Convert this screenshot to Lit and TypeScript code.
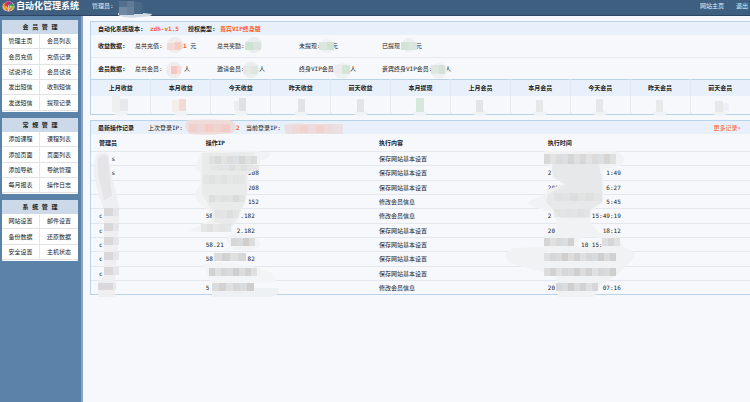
import { LitElement, html, svg, css, nothing } from "lit";
import { customElement } from "lit/decorators.js";

type Block = [x: number, y: number, w: number, h: number, fill: string];

interface Stat {
  label: string;
  slot: number;
  value?: string;
  unit: string;
  halo: string;
  blot: [cx: number, cy: number, r: number];
  blocks: Block[];
}

const MENUS = [
  { title: "会 员 管 理", items: ["管理主页", "会员列表", "会员充值", "充值记录", "试说评论", "会员试说", "发出短信", "收到短信", "发送短信", "提现记录"] },
  { title: "常 规 管 理", items: ["添加课程", "课程列表", "添加页面", "页面列表", "添加导航", "导航管理", "每月报表", "操作日志"] },
  { title: "系 统 管 理", items: ["网站设置", "邮件设置", "备份数据", "还原数据", "安全设置", "主机状态"] },
];

const INCOME: Stat[] = [
  { label: "总共充值:", slot: 48, value: "1", unit: "元", halo: "#f1ecec", blot: [40, 10, 8], blocks: [[32, 8, 8, 7, "#f3d9d3"], [40, 7, 6, 8, "#f3cdc4"], [46, 8, 2, 6, "#f3dcd6"]] },
  { label: "总共奖励:", slot: 53, unit: "", halo: "#e9edeb", blot: [37, 10, 8], blocks: [[28, 7, 8, 8, "#cde2d2"], [36, 7, 8, 8, "#dbe3de"]] },
  { label: "未提现:", slot: 33, unit: "元", halo: "#eff2f2", blot: [28, 11, 7], blocks: [[20, 7, 8, 8, "#dae7de"], [28, 7, 7, 8, "#cfe2d4"]] },
  { label: "已提现:", slot: 34, unit: "元", halo: "#eceff0", blot: [27, 10, 7], blocks: [[19, 7, 8, 8, "#d3e3d8"], [27, 7, 8, 8, "#dce6e0"]] },
];

const MEMBERS: Stat[] = [
  { label: "总共会员:", slot: 49, unit: "人", halo: "#f1ecec", blot: [39, 12, 8], blocks: [[36, 8, 6, 8, "#f3c8be"], [42, 8, 4, 8, "#f3ddd8"]] },
  { label: "邀请会员:", slot: 42, unit: "人", halo: "#eaeeec", blot: [34, 12, 8], blocks: [[26, 8, 8, 8, "#e6e9e8"], [34, 8, 7, 8, "#dce7df"]] },
  { label: "终身VIP会员:", slot: 51, unit: "人", halo: "#edf1f1", blot: [43, 13, 8], blocks: [[36, 7, 7, 9, "#ecebed"], [43, 7, 8, 9, "#d3e6d8"]] },
  { label: "贵宾终身VIP会员:", slot: 63, unit: "人", halo: "#edf1f1", blot: [57, 13, 8], blocks: [[49, 7, 8, 9, "#dde6e0"], [57, 7, 6, 9, "#d3e1d7"]] },
];

const PERIODS: { name: string; blocks: Block[] }[] = [
  { name: "上月收益", blocks: [[0, 0, 8, 16, "#eeeff1"], [8, 3, 8, 12, "#e6e8ec"]] },
  { name: "本月收益", blocks: [[0, 4, 7, 12, "#f5efe9"], [7, 3, 7, 12, "#f4dad7"]] },
  { name: "今天收益", blocks: [[2, 5, 5, 10, "#eceef0"], [7, 2, 7, 13, "#e0e1e5"]] },
  { name: "昨天收益", blocks: [[6, 3, 7, 13, "#e2e3e6"]] },
  { name: "前天收益", blocks: [[5, 3, 7, 13, "#e3e4e7"]] },
  { name: "本月提现", blocks: [[5, 2, 8, 14, "#d6e8db"]] },
  { name: "上月会员", blocks: [[5, 4, 7, 12, "#e3e4e7"]] },
  { name: "本月会员", blocks: [[5, 4, 7, 12, "#e5e7e9"]] },
  { name: "今天会员", blocks: [[5, 3, 7, 13, "#e5e7e9"]] },
  { name: "昨天会员", blocks: [[5, 4, 7, 12, "#e7e9eb"]] },
  { name: "前天会员", blocks: [[4, 5, 8, 11, "#e7e8ea"], [12, 7, 6, 8, "#edf1f5"]] },
];

const SAVE = "保存网站基本设置";
const EDIT = "修改会员信息";

const LOG: { name: [string, string]; ip: [string, string]; wide?: boolean; action: string; time: [string, string] }[] = [
  { name: ["", "s"], ip: ["", ""], action: SAVE, time: ["", ""] },
  { name: ["", "s"], ip: ["", "208"], wide: true, action: SAVE, time: ["2", "1:49"] },
  { name: ["", ""], ip: ["", "208"], wide: true, action: SAVE, time: ["2018", "6:27"] },
  { name: ["", ""], ip: ["", "152"], wide: true, action: EDIT, time: ["", "5:45"] },
  { name: ["c", ""], ip: ["58", ".182"], action: EDIT, time: ["2", "15:49:19"] },
  { name: ["c", ""], ip: ["", "2.182"], action: SAVE, time: ["20", "18:12"] },
  { name: ["c", ""], ip: ["58.21", ""], action: SAVE, time: ["", "10 15:     "] },
  { name: ["c", ""], ip: ["58", "82"], action: SAVE, time: ["", ""] },
  { name: ["c", ""], ip: ["", ""], action: SAVE, time: ["", ""] },
  { name: ["", ""], ip: ["5", ""], action: EDIT, time: ["20", "07:16"] },
];

const GREYS = ["#dcdcdc", "#d2d2d2", "#e0e0e1", "#d8d7d7", "#d9dcdf", "#cfcecd"];

const blocks = (list: Block[]) =>
  list.map(([x, y, w, h, fill]) => svg`<rect x=${x} y=${y} width=${w} height=${h} fill=${fill} />`);

/* A strip of mosaic tiles, `count` tiles long. */
const strip = (x: number, y: number, tile: number, count: number, h: number, shift = 0, opacity = 1) =>
  svg`<g opacity=${opacity}>${Array.from({ length: count }, (_, i) =>
    svg`<rect x=${x + i * tile} y=${y} width=${tile} height=${h} fill=${GREYS[(i + shift) % GREYS.length]} />`)}</g>`;

const nameVeil = svg`
  <path fill="#efeff1" d="M5 21 Q11 17 17 20 Q21 42 24 56 Q29 70 28 90 L24 150 L24 163 L7 163 L7 148 L13 142 L13 76 Q3 50 3 34Z" />
  <path fill="#e5e4e6" d="M7 24 Q12 19 17 22 L18 36 L21 62 L13 66 L7 40Z" />
  ${[74, 89, 103, 118, 133].map((y) => blocks([[13, y, 9, 8, "#dad7da"], [22, y, 6, 8, "#e6e6ea"]]))}
  ${blocks([[7, 149, 15, 7, "#dbd8dc"], [22, 149, 3, 7, "#e8e8ec"]])}`;

const ipVeil = svg`
  <path fill="#f1f2f3" d="M4 18 Q30 13 72 19 Q74 24 62 26 L62 34 L49 41 Q54 52 49 60 L47 70 L42 78 L41 86 L34 92
    L34 98 L3 98 Q-2 98 -10 97 Q2 92 8 88 L14 84 L14 78 Q-2 70 -3 60 Q0 52 3 50 L2 38 Q-6 34 -2 32Z" />
  <path fill="#e9eaea" d="M4 19 L56 18 L55 34 L49 41 L49 58 L46 70 L42 78 L34 92 L16 88 L14 76 L4 60Z" />
  ${strip(11, 22, 6, 8, 8, 0, 0.7)}
  ${strip(13, 31, 6, 8, 6, 2, 0.4)}
  ${strip(5, 41, 6, 7, 9, 4, 0.35)}
  ${strip(11, 61, 6, 6, 7, 1, 0.5)}
  ${strip(17, 76, 6, 4, 8, 3, 0.4)}
  ${strip(3, 90, 6, 5, 8, 0, 0.5)}
  <path fill="#f2f3f4" d="M28 106 Q30 98 44 100 Q64 102 62 112 Q58 117 36 116Z" />
  <path fill="#f3f4f5" d="M4 130 Q30 126 62 134 Q84 142 76 148 L14 150Z" />
  <path fill="#edf1f4" d="M14 154 L80 154 Q84 162 70 163 L14 163Z" />
  ${strip(33, 104, 6, 4, 8, 3)}
  ${strip(16, 119, 8, 4, 8, 0)}
  ${strip(11, 134, 6, 8, 8, 1)}
  ${strip(14, 149, 7, 6, 8, 0)}`;

const timeVeil = svg`
  <path fill="#f1f2f3" d="M4 17 L76 17 Q90 24 80 32 L62 36 Q66 60 62 70 L52 76 L50 88 L58 98 L76 100 L84 113 L62 113 L61 104 L46 102 L38 106 L38 113
    L4 113 L4 102 L17 98 L16 86 L12 78 Q-14 72 -12 68 L6 60 L6 56 L24 50 L12 44 L12 34 L4 30Z" />
  <path fill="#f1f2f3" d="M4 113 L84 113 Q100 118 92 126 L76 142 L60 152 L54 163 L18 163 L16 142 L-28 130 Q-42 120 -26 114Z" />
  <path fill="#e7e8e9" d="M13 28 Q20 24 26 28 L58 27 L62 46 L62 68 L50 76 L49 84 L20 84 L14 76 L6 68 L8 60 L26 50 Q12 46 12 34Z" />
  ${strip(4, 20, 6, 12, 10, 1, 0.8)}
  ${strip(14, 59, 8, 6, 8, 3, 0.4)}
  ${strip(14, 75, 6, 6, 8, 1, 0.3)}
  ${strip(4, 104, 6, 5, 8, 1, 0.9)}
  ${strip(62, 104, 6, 3, 8, 0, 0.9)}
  ${strip(4, 119, 6, 12, 8, 2)}
  ${strip(4, 134, 6, 12, 8, 0)}
  ${strip(16, 149, 6, 7, 8, 3)}`;

const PETALS = ["#f5c51c", "#f08a1d", "#e03a2c", "#d32a78", "#8c3fa8", "#3fa64b", "#9acb32"];

@customElement("app-root")
export class AppRoot extends LitElement {
  static styles = css`
    :host {
      display: flex;
      flex-direction: column;
      min-height: 100vh;
      overflow: hidden;
      background: #f6f8fb;
      color: #222;
      font: 6px/8px "DejaVu Sans Mono", "Noto Sans CJK SC", monospace;
    }
    a { color: inherit; text-decoration: none; }
    h1, h2, p, ul { margin: 0; padding: 0; font: inherit; }
    ul { list-style: none; }
    .top {
      display: flex;
      align-items: center;
      height: 12px;
      padding: 0 2px 3px;
      border-bottom: 1px solid #2d4563;
      background: #3e5f80;
      color: #e8eef5;
    }
    .logo { width: 13px; height: 11px; margin-right: 1px; }
    .brand {
      width: 76px;
      font: bold 9px/12px "Noto Sans CJK SC", sans-serif;
      color: #fff;
      white-space: nowrap;
    }
    .admin { position: relative; }
    .quick { display: flex; gap: 12px; margin-left: auto; }
    .veil {
      position: absolute;
      top: 0;
      left: 0;
      z-index: 1;
      width: 10px;
      height: 10px;
      overflow: visible;
      pointer-events: none;
    }
    .body { display: flex; flex: 1; }
    .side {
      display: flex;
      flex-direction: column;
      gap: 6px;
      box-sizing: border-box;
      width: 83px;
      flex: none;
      padding: 4px 3px 4px 2px;
      border-right: 2px solid #87a5c2;
      background: #5b82a8;
    }
    .menu { padding-bottom: 1px; background: #fff; border-radius: 1px; width: 76px; }
    .menu-title {
      height: 14px;
      font-weight: bold;
      line-height: 14px;
      text-align: center;
      background: #cbd9e8;
      white-space: pre;
    }
    .links {
      display: grid;
      grid-template-columns: 1fr 1fr;
      grid-auto-rows: 15px 16px 15px;
    }
    .links li {
      display: grid;
      place-items: center;
      border-bottom: 1px solid #e0e2e5;
    }
    .links li:nth-child(odd) { border-right: 1px solid #e4e6e9; }
    .main {
      display: flex;
      flex-direction: column;
      gap: 5px;
      flex: 1;
      min-width: 0;
      padding: 5px 0 0 7px;
    }
    .panel { border: solid #b9d3ea; border-width: 1px 0 1px 1px; }
    .bar {
      display: flex;
      align-items: center;
      height: 13px;
      padding: 0 9px 0 7px;
      background: #e8f1fb;
      white-space: nowrap;
    }
    .strong { font-weight: bold; }
    .hot { color: #ff5a1c; }
    .version { width: 52px; }
    .number { width: 38px; }
    .licence { width: 32px; }
    .stats {
      display: grid;
      grid-template-columns: 37px 82px 82px 83px auto;
      align-items: center;
      height: 22px;
      padding-left: 7px;
    }
    .stats + .stats { height: 21px; border-top: 1px solid #e6e9ed; }
    .stat { position: relative; display: flex; align-items: center; height: 22px; }
    .slot { white-space: nowrap; }
    .periods {
      width: 100%;
      border-collapse: collapse;
      table-layout: fixed;
      border-top: 1px solid #b9d3ea;
    }
    .periods th { height: 16px; padding: 0; background: #e8f1fb; border-left: 1px solid #e1e9f2; }
    .periods td { height: 18px; padding: 0; text-align: center; border-left: 1px solid #e6e9ed; }
    .periods th:first-child, .periods td:first-child { border-left: 0; }
    .tile { display: block; width: 18px; height: 18px; margin: 0 auto; overflow: visible; }
    .heading { width: 50px; }
    .login { position: relative; width: 98px; }
    .login .last { position: absolute; left: 88px; }
    .more { margin-left: auto; }
    .log {
      width: 100%;
      border-collapse: separate;
      border-spacing: 0;
      table-layout: fixed;
    }
    .log th, .log td { box-sizing: border-box; padding: 0 0 0 8px; }
    .log th { position: relative; height: 17px; text-align: left; }
    .log td { height: 14px; border-top: 1px solid #e4e7eb; }
    .log tr:nth-child(3n + 2) td { height: 15px; }
    .c1 { width: 16.2%; }
    .c2 { width: 26.3%; }
    .c3 { width: 25.6%; }
    .cut { display: flex; justify-content: space-between; height: 8px; white-space: pre; }
    .cut.name { width: 16px; }
    .cut.ip { width: 49px; }
    .cut.wide { width: 53px; }
    .cut.time { width: 73px; }
  `;

  private stat(s: Stat) {
    const [cx, cy, r] = s.blot;
    return html`<p class="stat">
      <span class="slot" style="width:${s.slot}px">${s.label}</span>
      ${s.value ? html`<span class="hot strong">${s.value}</span>&nbsp;` : nothing}<span>${s.unit}</span>
      <svg class="veil" viewBox="0 0 10 10" aria-hidden="true">
        <circle cx=${cx} cy=${cy} r=${r} fill=${s.halo} />${blocks(s.blocks)}
      </svg>
    </p>`;
  }

  private cut(kind: string, [head, tail]: [string, string]) {
    return html`<span class="cut ${kind}"><span>${head}</span><span>${tail}</span></span>`;
  }

  private veil(shape: unknown) {
    return html`<svg class="veil" viewBox="0 0 10 10" aria-hidden="true">${shape}</svg>`;
  }

  render() {
    return html`
      <header class="top">
        <svg class="logo" viewBox="0 0 13 11" aria-hidden="true">
          <ellipse cx="6.5" cy="5.5" rx="6" ry="5" fill="#f7e9dd" />
          ${PETALS.map((fill, i) => svg`<ellipse cx="6.5" cy="3.2" rx="1.9" ry="3" fill=${fill}
            transform="rotate(${-105 + i * 35} 6.5 6)" />`)}
          <path d="M3 8 Q6.5 12.5 10 8 L6.5 5Z" fill="#ec6a3c" />
          <path d="M6.5 10V4M6.5 9.5L4 5M6.5 9.5L9 5" stroke="#fff" stroke-width=".5" fill="none" />
        </svg>
        <h1 class="brand">自动化管理系统</h1>
        <p class="admin">管理员:
          <svg class="veil" viewBox="0 0 10 10" aria-hidden="true">
            <path d="M26 11 Q42 9 60 12 Q60 15 48 15 Q34 17 26 13Z" fill="#d3dae3" />
            ${blocks([[27, -1, 8, 6, "#54708e"], [35, -1, 7, 6, "#5f7b98"], [42, 0, 7, 12, "#4b6a8a"], [27, 5, 8, 8, "#7188a1"], [35, 5, 7, 8, "#667f9b"], [49, 1, 2, 11, "#456585"]])}
          </svg>
        </p>
        <nav class="quick"><a href="#home">网站主页</a><a href="#logout">退出</a></nav>
      </header>
      <div class="body">
        <nav class="side">
          ${MENUS.map((m) => html`<section class="menu">
            <h2 class="menu-title">${m.title}</h2>
            <ul class="links">${m.items.map((t) => html`<li><a href="#menu">${t}</a></li>`)}</ul>
          </section>`)}
        </nav>
        <main class="main">
          <section class="panel">
            <div class="bar strong">
              <span class="version">自动化系统版本:</span><span class="number hot">zdh-v1.5</span>
              <span class="licence">授权类型:</span><span class="hot">贵宾VIP终身版</span>
            </div>
            <div class="stats"><span class="strong">收益数据:</span>${INCOME.map((s) => this.stat(s))}</div>
            <div class="stats"><span class="strong">会员数据:</span>${MEMBERS.map((s) => this.stat(s))}</div>
            <table class="periods">
              <thead><tr>${PERIODS.map((p) => html`<th scope="col">${p.name}</th>`)}</tr></thead>
              <tbody><tr>${PERIODS.map((p) => html`<td>
                <svg class="tile" viewBox="0 0 18 18" aria-hidden="true">
                  <ellipse cx="9" cy="17" rx="7" ry="3" fill="#f0f3f6" />${blocks(p.blocks)}
                </svg></td>`)}</tr></tbody>
            </table>
          </section>
          <section class="panel">
            <div class="bar">
              <h2 class="heading strong">最新操作记录</h2>
              <p class="login">上次登录IP:<span class="last hot strong">2</span>
                <svg class="veil" viewBox="0 0 10 10" aria-hidden="true">
                  <path d="M40 -4 Q60 -5 82 -4 Q92 2 84 9 Q60 12 42 10 Q34 3 40 -4Z" fill="#efdbd9" />
                  ${blocks([[41, 0, 8, 8, "#f0d0cc"], [49, 0, 8, 8, "#edd6d5"], [57, 0, 8, 8, "#f2ccc5"], [65, 0, 8, 8, "#eed3cf"], [73, 0, 9, 8, "#f2cdc6"]])}
                </svg>
              </p>
              <p class="login">当前登录IP:
                <svg class="veil" viewBox="0 0 10 10" aria-hidden="true">
                  <path d="M38 1 Q46 -2 60 0 L97 0 L97 10 L40 10Z" fill="#ecdfe2" />
                  ${blocks([[46, 1, 8, 8, "#edd9da"], [54, 1, 8, 8, "#f1d2cd"], [62, 1, 8, 8, "#ecdadc"], [70, 1, 8, 8, "#f0d3d0"], [78, 1, 8, 8, "#eedad9"]])}
                </svg>
              </p>
              <a class="more hot" href="#records">更多记录»</a>
            </div>
            <table class="log">
              <thead>
                <tr>
                  <th class="c1" scope="col">管理员${this.veil(nameVeil)}</th>
                  <th class="c2" scope="col">操作IP${this.veil(ipVeil)}</th>
                  <th class="c3" scope="col">执行内容</th>
                  <th scope="col">执行时间${this.veil(timeVeil)}</th>
                </tr>
              </thead>
              <tbody>
                ${LOG.map((r) => html`<tr>
                  <td>${this.cut("name", r.name)}</td>
                  <td>${this.cut(r.wide ? "wide" : "ip", r.ip)}</td>
                  <td>${r.action}</td>
                  <td>${this.cut("time", r.time)}</td>
                </tr>`)}
              </tbody>
            </table>
          </section>
        </main>
      </div>
    `;
  }
}
